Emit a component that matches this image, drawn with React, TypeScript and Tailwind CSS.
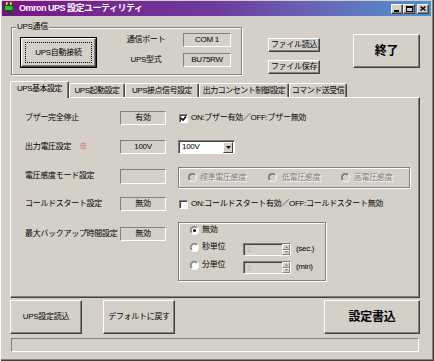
import React from "react";

function Btn({ className = "", children }: { className?: string; children?: React.ReactNode }) {
  return (
    <div
      className={`flex items-center justify-center bg-[#d4d0c8] border border-t-white border-l-white border-r-[#404040] border-b-[#404040] shadow-[inset_-1px_-1px_0_#808080] ${className}`}
    >
      {children}
    </div>
  );
}

function Field({ className = "", children }: { className?: string; children?: React.ReactNode }) {
  return (
    <div
      className={`flex items-center justify-center h-[14px] border border-t-[#808080] border-l-[#808080] border-r-white border-b-white leading-none ${className}`}
    >
      {children}
    </div>
  );
}

function Group({ className = "", label, children }: { className?: string; label?: string; children?: React.ReactNode }) {
  return (
    <div className={`relative border border-[#808080] shadow-[inset_1px_1px_0_#fff,1px_1px_0_#fff] ${className}`}>
      {label && (
        <span className="absolute left-[4px] top-[-6px] px-[1px] bg-[#d4d0c8] leading-[10px]">{label}</span>
      )}
      {children}
    </div>
  );
}

function Check({ checked }: { checked?: boolean }) {
  return (
    <div className="w-[9px] h-[9px] bg-white border border-t-[#808080] border-l-[#808080] border-r-white border-b-white shadow-[inset_1px_1px_0_#404040] flex items-center justify-center shrink-0">
      {checked && (
        <svg width="7" height="7" viewBox="0 0 7 7">
          <path d="M1 3 L3 5 L6 1.5" stroke="#000" strokeWidth="1.6" fill="none" />
        </svg>
      )}
    </div>
  );
}

function Radio({ checked, disabled }: { checked?: boolean; disabled?: boolean }) {
  return (
    <svg width="9" height="9" viewBox="0 0 9 9" className="shrink-0">
      <circle cx="4.5" cy="4.5" r="4" fill={disabled ? "#d4d0c8" : "#ffffff"} />
      <path d="M1.3 7.3 A4 4 0 0 1 7.3 1.3" stroke="#808080" strokeWidth="1" fill="none" />
      <path d="M2 6.6 A3 3 0 0 1 6.6 2" stroke="#404040" strokeWidth="0.8" fill="none" />
      <path d="M7.6 1.6 A4 4 0 0 1 1.6 7.6" stroke="#ffffff" strokeWidth="1" fill="none" />
      {checked && <circle cx="4.5" cy="4.5" r="1.5" fill="#000" />}
    </svg>
  );
}

function Spin() {
  return (
    <div className="w-[48px] h-[13px] flex items-stretch bg-[#d4d0c8] border border-t-[#808080] border-l-[#808080] border-r-white border-b-white shadow-[inset_1px_1px_0_#404040] self-start mt-[3px]">
      <span className="pl-[3px] text-[#b0b0b0] leading-[11px] flex-1">1</span>
      <div className="w-[8px] flex flex-col">
        <div className="flex-1 bg-[#d4d0c8] border border-t-white border-l-white border-r-[#808080] border-b-[#808080] flex items-center justify-center">
          <svg width="3" height="2" viewBox="0 0 3 2">
            <path d="M0 2 L1.5 0 L3 2 Z" fill="#808080" />
          </svg>
        </div>
        <div className="flex-1 bg-[#d4d0c8] border border-t-white border-l-white border-r-[#808080] border-b-[#808080] flex items-center justify-center">
          <svg width="3" height="2" viewBox="0 0 3 2">
            <path d="M0 0 L1.5 2 L3 0 Z" fill="#808080" />
          </svg>
        </div>
      </div>
    </div>
  );
}

function CapBtn({ children, className = "" }: { children?: React.ReactNode; className?: string }) {
  return (
    <div
      className={`w-[12px] h-[10px] bg-[#d4d0c8] border border-t-white border-l-white border-r-[#404040] border-b-[#404040] shadow-[inset_-1px_-1px_0_#808080] flex items-center justify-center ${className}`}
    >
      {children}
    </div>
  );
}

function PlugIcon() {
  return (
    <svg width="11" height="13" viewBox="0 0 11 13" className="shrink-0">
      <rect x="2" y="0" width="1.6" height="4" fill="#e8e800" />
      <rect x="6" y="0" width="1.6" height="4" fill="#e8e800" />
      <rect x="0.5" y="3.5" width="8.5" height="5" rx="1" fill="#30c030" stroke="#005a00" strokeWidth="1" />
      <path d="M4.8 8.5 L4.8 11.5 L10 11.5" stroke="#005a00" strokeWidth="1.4" fill="none" />
    </svg>
  );
}

function Tab({ label, w, selected }: { label: string; w: string; selected?: boolean }) {
  if (selected) {
    return (
      <div
        className={`${w} h-[17px] mb-[-1px] relative z-10 bg-[#d4d0c8] border-t border-l border-r border-t-white border-l-white border-r-[#404040] rounded-t-[2px] shadow-[inset_-1px_0_0_#808080] flex items-center justify-center leading-none pb-[2px] tracking-[-0.5px] whitespace-nowrap`}
      >
        {label}
      </div>
    );
  }
  return (
    <div
      className={`${w} h-[14px] bg-[#d4d0c8] border-t border-l border-r border-t-white border-l-white border-r-[#404040] rounded-t-[2px] shadow-[inset_-1px_0_0_#808080] flex items-center justify-center leading-none tracking-[-0.5px] whitespace-nowrap`}
    >
      {label}
    </div>
  );
}

const dis = "text-[#808080] [text-shadow:1px_1px_0_#fff]";

export default function App() {
  return (
    <div className="w-[434px] h-[361px] bg-[#d4d0c8] pt-[1px] pl-[2px] pr-[3px] pb-[3px] shadow-[inset_1px_0_0_#fff,inset_-1px_-1px_0_#404040,inset_-2px_-2px_0_#808080] font-['Liberation_Sans','Noto_Sans_CJK_JP',sans-serif] text-[8px] text-black tracking-[-0.3px] overflow-hidden">
      {/* Title bar */}
      <div className="h-[15px] flex items-center bg-linear-to-r from-[#7a0e86] via-[#6d3a9e] to-[#4a92d2] pl-[2px] pr-[2px]">
        <PlugIcon />
        <span className="ml-[4px] text-white font-bold text-[9px] leading-none tracking-[-0.5px]">
          Omron UPS 設定ユーティリティ
        </span>
        <div className="ml-auto flex items-center">
          <CapBtn>
            <div className="w-[5px] h-[2px] bg-black mt-[4px] mr-[1px]" />
          </CapBtn>
          <CapBtn>
            <div className="w-[7px] h-[6px] border border-black border-t-2" />
          </CapBtn>
          <CapBtn className="ml-[2px]">
            <svg width="6" height="5" viewBox="0 0 6 5">
              <path d="M0.5 0.5 L5.5 4.5 M5.5 0.5 L0.5 4.5" stroke="#000" strokeWidth="1.4" />
            </svg>
          </CapBtn>
        </div>
      </div>

      {/* Top section */}
      <div className="flex items-start mt-[11px] ml-[9px] h-[48px]">
        <Group label="UPS通信" className="w-[231px] h-[48px] flex items-start">
          <div className="ml-[8px] mt-[9px] w-[77px] h-[31px] border border-black">
            <Btn className="w-full h-full">
              <div className="w-[67px] h-[21px] border border-dotted border-black flex items-center justify-center leading-none">
                UPS自動接続
              </div>
            </Btn>
          </div>
          <div className="ml-[25px] mt-[5px] grid grid-cols-[48px_48px] gap-x-[13px] gap-y-[6px] items-center">
            <div className="text-center leading-none">通信ポート</div>
            <Field>COM 1</Field>
            <div className="text-center leading-none">UPS型式</div>
            <Field>BU75RW</Field>
          </div>
        </Group>
        <div className="flex flex-col gap-[8px] ml-[26px] mt-[11px]">
          <Btn className="w-[52px] h-[14px] leading-none">ファイル読込</Btn>
          <Btn className="w-[52px] h-[14px] leading-none">ファイル保存</Btn>
        </div>
        <Btn className="ml-[33px] mt-[7px] w-[67px] h-[34px] text-[12px] font-bold leading-none">終了</Btn>
      </div>

      {/* Tabs */}
      <div className="mt-[6px] ml-[8px] h-[16px] flex items-end">
        <Tab label="UPS基本設定" w="w-[59px]" selected />
        <Tab label="UPS起動設定" w="w-[56px]" />
        <Tab label="UPS接点信号設定" w="w-[74px]" />
        <Tab label="出力コンセント制御設定" w="w-[90px]" />
        <Tab label="コマンド送受信" w="w-[58px]" />
      </div>

      {/* Panel */}
      <div className="ml-[8px] w-[410px] h-[201px] border border-t-white border-l-white border-r-[#404040] border-b-[#404040] shadow-[inset_-1px_-1px_0_#808080] flex flex-col pl-[14px]">
        {/* Row 1 */}
        <div className="flex items-center h-[14px] mt-[13px]">
          <div className="w-[95px] leading-none">ブザー完全停止</div>
          <Field className="w-[46px]">有効</Field>
          <div className="ml-[13px]">
            <Check checked />
          </div>
          <span className="ml-[3px] leading-none">ON:ブザー有効／OFF:ブザー無効</span>
        </div>
        {/* Row 2 */}
        <div className="flex items-center h-[14px] mt-[15px]">
          <div className="w-[95px] leading-none flex items-center">
            出力電圧設定<span className="ml-[8px] text-[#e02020]">※</span>
          </div>
          <Field className="w-[46px]">100V</Field>
          <div className="ml-[12px] w-[57px] h-[14px] bg-white border border-t-[#808080] border-l-[#808080] border-r-white border-b-white shadow-[inset_1px_1px_0_#404040] flex items-center">
            <span className="pl-[3px] flex-1 leading-none">100V</span>
            <div className="w-[10px] h-[11px] mr-[1px] bg-[#d4d0c8] border border-t-white border-l-white border-r-[#404040] border-b-[#404040] flex items-center justify-center">
              <svg width="5" height="3" viewBox="0 0 5 3">
                <path d="M0 0 L2.5 3 L5 0 Z" fill="#000" />
              </svg>
            </div>
          </div>
        </div>
        {/* Row 3 */}
        <div className="flex items-start h-[14px] mt-[15px]">
          <div className="w-[95px] leading-none mt-[3px]">電圧感度モード設定</div>
          <Field className="w-[46px] h-[15px]" />
          <Group className="ml-[12px] w-[232px] h-[21px] mt-[-2px] flex items-center pl-[9px]">
            <div className="w-[80px] flex items-center">
              <Radio disabled />
              <span className={`ml-[3px] leading-none ${dis}`}>標準電圧感度</span>
            </div>
            <div className="w-[73px] flex items-center">
              <Radio disabled />
              <span className={`ml-[5px] leading-none ${dis}`}>低電圧感度</span>
            </div>
            <div className="flex items-center">
              <Radio disabled />
              <span className={`ml-[4px] leading-none ${dis}`}>高電圧感度</span>
            </div>
          </Group>
        </div>
        {/* Row 4 */}
        <div className="flex items-center h-[14px] mt-[14px]">
          <div className="w-[95px] leading-none">コールドスタート設定</div>
          <Field className="w-[46px]">無効</Field>
          <div className="ml-[13px]">
            <Check />
          </div>
          <span className="ml-[3px] leading-none">ON:コールドスタート有効／OFF:コールドスタート無効</span>
        </div>
        {/* Row 5 */}
        <div className="flex items-start h-[14px] mt-[16px]">
          <div className="w-[95px] leading-none mt-[3px]">最大バックアップ時間設定</div>
          <Field className="w-[46px]">無効</Field>
          <Group className="ml-[12px] w-[148px] h-[59px] mt-[-5px] flex flex-col pl-[11px]">
            <div className="flex items-center h-[14px]">
              <Radio checked />
              <span className="ml-[3px] leading-none">無効</span>
            </div>
            <div className="flex items-start h-[14px] mt-[3px]">
              <div className="h-[14px] flex items-center w-[53px]">
                <Radio />
                <span className="ml-[3px] leading-none">秒単位</span>
              </div>
              <Spin />
              <span className="ml-[5px] leading-none mt-[5px]">(sec.)</span>
            </div>
            <div className="flex items-start h-[14px] mt-[4px]">
              <div className="h-[14px] flex items-center w-[53px]">
                <Radio />
                <span className="ml-[3px] leading-none">分単位</span>
              </div>
              <Spin />
              <span className="ml-[5px] leading-none mt-[5px]">(min)</span>
            </div>
          </Group>
        </div>
      </div>

      {/* Bottom buttons */}
      <div className="mt-[2px] ml-[8px] flex">
        <Btn className="w-[72px] h-[34px] leading-none">UPS設定読込</Btn>
        <Btn className="ml-[21px] w-[72px] h-[34px] leading-none">デフォルトに戻す</Btn>
        <Btn className="ml-[149px] w-[96px] h-[34px] text-[12px] font-bold leading-none">設定書込</Btn>
      </div>

      {/* Status bar */}
      <div className="mt-[4px] ml-[9px] w-[408px] h-[14px] border border-t-[#808080] border-l-[#808080] border-r-white border-b-white" />
    </div>
  );
}
